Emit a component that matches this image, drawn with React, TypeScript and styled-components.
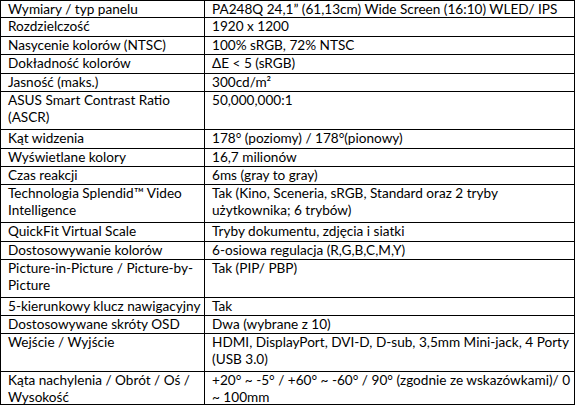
import React from "react";
import styled, { createGlobalStyle } from "styled-components";

const Global = createGlobalStyle`
  html, body { margin: 0; padding: 0; background: #ffffff; }
  body { font-family: Lato, "Open Sans", sans-serif; }
`;

const Table = styled.div`
  width: 575px;
  box-sizing: border-box;
  border-top: 1px solid #000;
  border-left: 1px solid #000;
  display: flex;
  flex-direction: column;
  font-family: Lato, "Open Sans", sans-serif;
  font-size: 13.6px;
  line-height: 16.8px;
  color: #000;
`;

const Row = styled.div<{ $h: number }>`
  display: grid;
  grid-template-columns: 204px 1fr;
  height: ${(p) => p.$h}px;
`;

const Cell = styled.div`
  box-sizing: border-box;
  border-right: 1px solid #000;
  border-bottom: 1px solid #000;
  padding: 0 0 0 7px;
  white-space: nowrap;
  overflow: hidden;
`;

type Spec = { label: string[]; value: string[]; h: number };

const S = 18.4;
const D = 37.7;

const rows: Spec[] = [
  { label: ["Wymiary / typ panelu"], value: ["PA248Q 24,1\u201D (61,13cm) Wide Screen (16:10) WLED/ IPS"], h: S - 1 },
  { label: ["Rozdzielczość"], value: ["1920 x 1200"], h: S },
  { label: ["Nasycenie kolorów (NTSC)"], value: ["100% sRGB, 72% NTSC"], h: S },
  { label: ["Dokładność kolorów"], value: ["ΔE < 5 (sRGB)"], h: S },
  { label: ["Jasność (maks.)"], value: ["300cd/m²"], h: S },
  { label: ["ASUS Smart Contrast Ratio", "(ASCR)"], value: ["50,000,000:1"], h: D + 0.6 },
  { label: ["Kąt widzenia"], value: ["178° (poziomy) / 178°(pionowy)"], h: S },
  { label: ["Wyświetlane kolory"], value: ["16,7 milionów"], h: S },
  { label: ["Czas reakcji"], value: ["6ms (gray to gray)"], h: S },
  { label: ["Technologia Splendid™ Video", "Intelligence"], value: ["Tak (Kino, Sceneria, sRGB, Standard oraz 2 tryby", "użytkownika; 6 trybów)"], h: D },
  { label: ["QuickFit Virtual Scale"], value: ["Tryby dokumentu, zdjęcia i siatki"], h: S },
  { label: ["Dostosowywanie kolorów"], value: ["6-osiowa regulacja (R,G,B,C,M,Y)"], h: S },
  { label: ["Picture-in-Picture / Picture-by-", "Picture"], value: ["Tak (PIP/ PBP)"], h: D },
  { label: ["5-kierunkowy klucz nawigacyjny"], value: ["Tak"], h: S },
  { label: ["Dostosowywane skróty OSD"], value: ["Dwa (wybrane z 10)"], h: S },
  { label: ["Wejście / Wyjście"], value: ["HDMI, DisplayPort, DVI-D, D-sub, 3,5mm Mini-jack, 4 Porty", "(USB 3.0)"], h: D },
  { label: ["Kąta nachylenia / Obrót / Oś /", "Wysokość"], value: ["+20° ~ -5° / +60° ~ -60° / 90° (zgodnie ze wskazówkami)/ 0", "~ 100mm"], h: 33.4 },
];

const Lines = ({ lines }: { lines: string[] }) => (
  <>
    {lines.map((l, i) => (
      <React.Fragment key={i}>
        {i > 0 && <br />}
        {l}
      </React.Fragment>
    ))}
  </>
);

export default function App() {
  return (
    <>
      <Global />
      <Table>
        {rows.map((r, i) => (
          <Row key={i} $h={r.h}>
            <Cell>
              <Lines lines={r.label} />
            </Cell>
            <Cell>
              <Lines lines={r.value} />
            </Cell>
          </Row>
        ))}
      </Table>
    </>
  );
}
